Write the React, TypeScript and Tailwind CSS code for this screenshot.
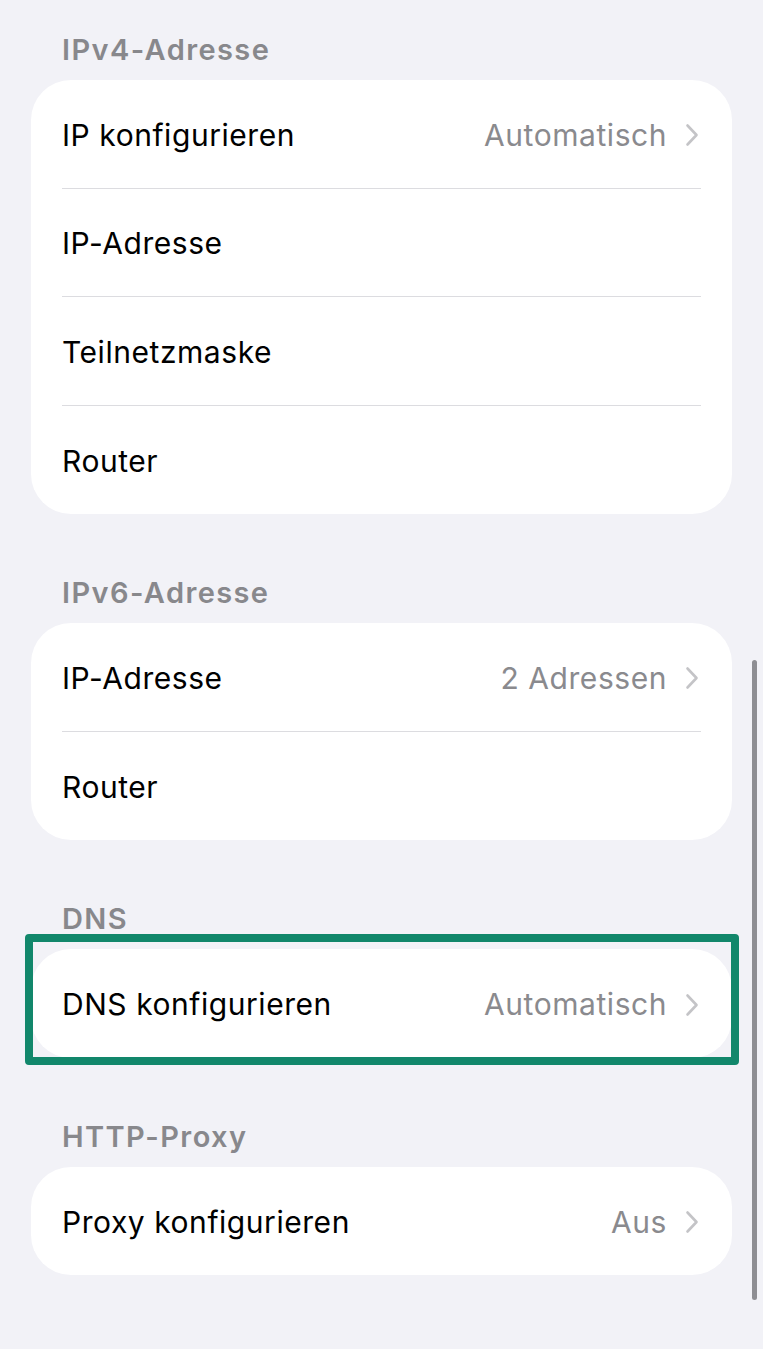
import React from "react";

type Row = { label: string; value?: string; chevron?: boolean };

type Section = { title: string; rows: Row[]; highlight?: boolean };

const sections: Section[] = [
  {
    title: "IPv4-Adresse",
    rows: [
      { label: "IP konfigurieren", value: "Automatisch", chevron: true },
      { label: "IP-Adresse" },
      { label: "Teilnetzmaske" },
      { label: "Router" },
    ],
  },
  {
    title: "IPv6-Adresse",
    rows: [
      { label: "IP-Adresse", value: "2 Adressen", chevron: true },
      { label: "Router" },
    ],
  },
  {
    title: "DNS",
    rows: [{ label: "DNS konfigurieren", value: "Automatisch", chevron: true }],
    highlight: true,
  },
  {
    title: "HTTP-Proxy",
    rows: [{ label: "Proxy konfigurieren", value: "Aus", chevron: true }],
  },
];

function Chevron() {
  return (
    <svg width="14" height="24" viewBox="0 0 14 24" fill="none" className="ml-[18px] shrink-0">
      <path
        d="M2.5 2.5 L11.5 12 L2.5 21.5"
        stroke="#c4c4c7"
        strokeWidth="2.6"
        strokeLinecap="round"
        strokeLinejoin="round"
      />
    </svg>
  );
}

function SettingsRow({ row, last }: { row: Row; last: boolean }) {
  return (
    <div className="px-[31px]">
      <div
        className={
          "flex h-[108.5px] items-center pt-[3px] pr-[2px] " +
          (last ? "" : "border-b border-[#dcdce0]")
        }
      >
        <span className="flex-1 text-[30px] text-black tracking-[0.55px]">{row.label}</span>
        {row.value && (
          <span className="text-[30px] text-[#8a8a8e] tracking-[0.55px]">{row.value}</span>
        )}
        {row.chevron && <Chevron />}
      </div>
    </div>
  );
}

function SettingsSection({ section }: { section: Section }) {
  return (
    <div className="relative">
      <div className="h-[34px] pl-[31px] pt-[2px] text-[29px] leading-[34px] font-semibold tracking-[1.4px] text-[#88888c]">
        {section.title}
      </div>
      <div className="relative mt-[15px]">
        <div className="overflow-hidden rounded-[40px] bg-white">
          {section.rows.map((row, i) => (
            <SettingsRow key={row.label + i} row={row} last={i === section.rows.length - 1} />
          ))}
        </div>
        {section.highlight && (
          <div className="pointer-events-none absolute -left-[6px] -right-[7px] -top-[15px] -bottom-[7px] rounded-[4px] border-[8px] border-[#12876b]" />
        )}
      </div>
    </div>
  );
}

export default function App() {
  return (
    <div
      className="relative min-h-[1349px] w-[763px] overflow-hidden bg-[#f2f2f7]"
      style={{ fontFamily: "Inter, 'Liberation Sans', sans-serif" }}
    >
      <div className="flex flex-col gap-[60px] px-[31px] pt-[31px]">
        {sections.map((s) => (
          <SettingsSection key={s.title} section={s} />
        ))}
      </div>
      {/* scroll indicator */}
      <div className="absolute left-[752px] top-[660px] h-[640px] w-[5px] rounded-full bg-[#8e8e93]" />
    </div>
  );
}
